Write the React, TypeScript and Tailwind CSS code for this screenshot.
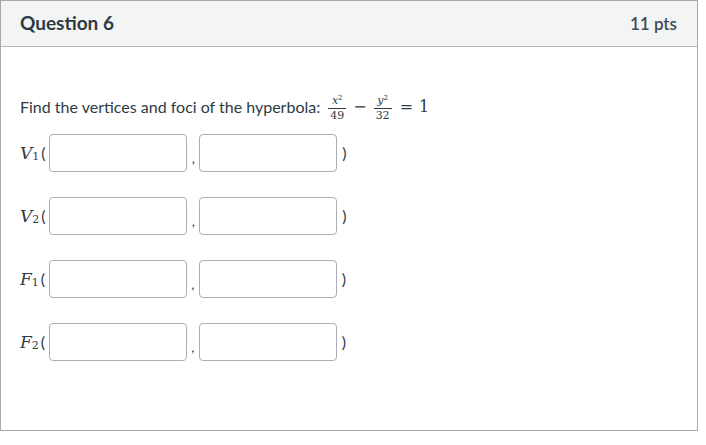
import React from "react";

const Frac = ({ n, d }: { n: React.ReactNode; d: string }) => (
  <span className="inline-flex flex-col items-center mx-[2px] relative top-[1px] font-['DejaVu_Serif',serif]">
    <span className="text-[11px] leading-[12px] px-[2px]">{n}</span>
    <span className="w-full border-t border-[#2d3b45] my-[1px]"></span>
    <span className="text-[11px] leading-[12px] px-[2px]">{d}</span>
  </span>
);

const Row = ({ v, sub }: { v: string; sub: string }) => (
  <div className="flex items-center h-[38px]">
    <span className="font-['DejaVu_Serif',serif] italic text-[17px] text-[#2d3b45] leading-none">{v}</span>
    <span className="font-['DejaVu_Serif',serif] text-[11px] text-[#2d3b45] relative top-[4px]">{sub}</span>
    <span className="text-[16px] ml-[2px] w-[8px]">(</span>
    <div className="w-[138px] h-[38px] border border-[#a9b0b5] rounded-[4px] bg-white" />
    <span className="w-[12px] text-center text-[14px] relative top-[4px]">,</span>
    <div className="w-[138px] h-[38px] border border-[#a9b0b5] rounded-[4px] bg-white" />
    <span className="text-[16px] ml-[5px]">)</span>
  </div>
);

export default function App() {
  return (
    <div className="w-[706px] h-[445px] bg-white font-['Lato','Noto_Sans',sans-serif] text-[#2d3b45]">
      <div className="w-[698px] h-[431px] border border-[#a9a9a9] flex flex-col">
        <div className="h-[46px] bg-[#f3f4f4] border-b border-[#b8b8b8] flex items-center justify-between pl-[19px] pr-[20px]">
          <span className="text-[19px] font-bold">Question 6</span>
          <span className="text-[17px] font-semibold text-[#3d4a54]">11 pts</span>
        </div>
        <div className="pl-[19px] pt-[45px]">
          <div className="flex items-center text-[16px] h-[30px]">
            <span>Find the vertices and foci of the hyperbola:</span>
            <span className="ml-[6px] inline-flex items-center font-['DejaVu_Serif',serif]">
              <Frac n={<span><i className="italic">x</i><sup className="text-[7px]">2</sup></span>} d="49" />
              <span className="text-[16px] mx-[5px]">−</span>
              <Frac n={<span><i className="italic">y</i><sup className="text-[7px]">2</sup></span>} d="32" />
              <span className="text-[16px] ml-[6px]">=</span>
              <span className="text-[16px] ml-[6px]">1</span>
            </span>
          </div>
          <div className="mt-[12px] flex flex-col gap-[25px]">
            <Row v="V" sub="1" />
            <Row v="V" sub="2" />
            <Row v="F" sub="1" />
            <Row v="F" sub="2" />
          </div>
        </div>
      </div>
    </div>
  );
}
